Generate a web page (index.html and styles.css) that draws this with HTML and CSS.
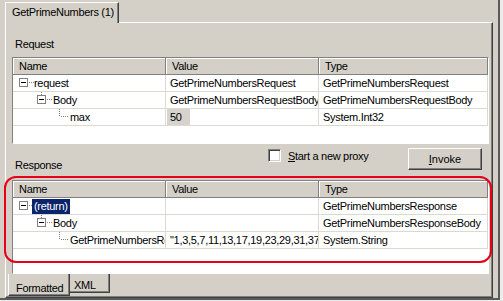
FILE: index.html
```html
<!DOCTYPE html>
<html lang="en">
<head>
<meta charset="UTF-8" />
<title>WCF Test Client - GetPrimeNumbers</title>
<link rel="stylesheet" href="styles.css">
</head>
<body>

<div class="shot">
  <div class="tabstrip">
    <div class="tab">GetPrimeNumbers (1)</div>
  </div>

  <div class="page">
    <div class="section-label">Request</div>

    <div class="grid">
      <div class="grid-head">
        <div class="head-cell">Name</div>
        <div class="head-cell">Value</div>
        <div class="head-cell">Type</div>
      </div>
      <div class="row">
        <div class="cell name">
          <svg class="gutter" width="21" height="16" viewBox="0 0 21 16">
            <rect x="6.5" y="3.5" width="8" height="8" fill="#fff" stroke="#808080"/>
            <path d="M8 7.5h5" stroke="#000"/>
            <path d="M16 7.5h5" stroke="#808080" stroke-dasharray="1 1"/>
          </svg>
          request
        </div>
        <div class="cell">GetPrimeNumbersRequest</div>
        <div class="cell">GetPrimeNumbersRequest</div>
      </div>
      <div class="row">
        <div class="cell name">
          <svg class="gutter" width="40" height="16" viewBox="0 0 40 16">
            <path d="M28.5 0v3" stroke="#808080" stroke-dasharray="1 1"/>
            <rect x="24.5" y="3.5" width="8" height="8" fill="#fff" stroke="#808080"/>
            <path d="M26 7.5h5" stroke="#000"/>
            <path d="M34 7.5h5" stroke="#808080" stroke-dasharray="1 1"/>
          </svg>
          Body
        </div>
        <div class="cell">GetPrimeNumbersRequestBody</div>
        <div class="cell">GetPrimeNumbersRequestBody</div>
      </div>
      <div class="row">
        <div class="cell name">
          <svg class="gutter" width="57" height="16" viewBox="0 0 57 16">
            <path d="M46.5 0v8" stroke="#808080" stroke-dasharray="1 1"/>
            <path d="M48 7.5h8" stroke="#808080" stroke-dasharray="1 1"/>
          </svg>
          max
        </div>
        <div class="cell edit"><span class="edit-box">50</span></div>
        <div class="cell">System.Int32</div>
      </div>
    </div>

    <div class="toolbar">
      <div class="section-label">Response</div>
      <label class="proxy">
        <span class="check"></span>
        <span><u>S</u>tart a new proxy</span>
      </label>
      <button type="button" class="invoke"><u>I</u>nvoke</button>
    </div>

    <div class="grid response">
      <div class="grid-head">
        <div class="head-cell">Name</div>
        <div class="head-cell">Value</div>
        <div class="head-cell">Type</div>
      </div>
      <div class="row">
        <div class="cell name">
          <svg class="gutter" width="19" height="16" viewBox="0 0 19 16">
            <rect x="6.5" y="3.5" width="8" height="8" fill="#fff" stroke="#808080"/>
            <path d="M8 7.5h5" stroke="#000"/>
            <path d="M16 7.5h3" stroke="#808080" stroke-dasharray="1 1"/>
          </svg>
          <span class="selected">(return)</span>
        </div>
        <div class="cell"></div>
        <div class="cell">GetPrimeNumbersResponse</div>
      </div>
      <div class="row">
        <div class="cell name">
          <svg class="gutter" width="40" height="16" viewBox="0 0 40 16">
            <path d="M28.5 0v3" stroke="#808080" stroke-dasharray="1 1"/>
            <rect x="24.5" y="3.5" width="8" height="8" fill="#fff" stroke="#808080"/>
            <path d="M26 7.5h5" stroke="#000"/>
            <path d="M34 7.5h5" stroke="#808080" stroke-dasharray="1 1"/>
          </svg>
          Body
        </div>
        <div class="cell"></div>
        <div class="cell">GetPrimeNumbersResponseBody</div>
      </div>
      <div class="row">
        <div class="cell name">
          <svg class="gutter" width="57" height="16" viewBox="0 0 57 16">
            <path d="M46.5 0v8" stroke="#808080" stroke-dasharray="1 1"/>
            <path d="M48 7.5h8" stroke="#808080" stroke-dasharray="1 1"/>
          </svg>
          GetPrimeNumbersResult
        </div>
        <div class="cell">"1,3,5,7,11,13,17,19,23,29,31,37,41,43,47"</div>
        <div class="cell">System.String</div>
      </div>
    </div>

    <div class="subtabs">
      <div class="subtab active">Formatted</div>
      <div class="subtab">XML</div>
    </div>
  </div>

  <!-- red annotation drawn over the response grid -->
  <div class="callout"></div>
</div>

</body>
</html>
```

FILE: styles.css
```css
/* Reset & base */
* {
  box-sizing: border-box;
}
body {
  margin: 0;
  background: #ececec;
  font-family: 'Liberation Sans', Arial, sans-serif;
  font-size: 11px;
  letter-spacing: -0.3px;
  color: #000;
}

/* Whole window, with its dark shadow edge */
.shot {
  position: relative;
  width: 500px;
  height: 300px;
  background: #d4d0c8;
  padding: 2px 0 0 5px;
  border-right: 2px solid #5a5a5a;
  border-bottom: 2px solid #5a5a5a;
}

/* Top tab */
.tabstrip {
  display: flex;
  height: 20px;
}
.tab {
  position: relative;
  z-index: 1;
  width: 114px;
  height: 21px;
  padding: 0 0 0 6px;
  line-height: 19px;
  background: #d4d0c8;
  border: 1px solid;
  border-color: #fff #404040 transparent #fff;
  border-bottom: none;
  box-shadow: inset -1px 0 #808080;
}

/* Tab page */
.page {
  width: 488px;
  height: 276px;
  border: 1px solid;
  border-color: #fff #404040 #404040 #fff;
  box-shadow: inset -1px -1px #808080;
  padding: 14px 3px 0 6px;
}

.section-label {
  height: 14px;
  line-height: 14px;
  padding-left: 3px;
  margin-bottom: 6px;
}

/* Property grids */
.grid {
  height: 87px;
  background: #fff;
  border: 1px solid;
  border-color: #808080 #fff #fff #808080;
  overflow: hidden;
}
.grid.response {
  height: 94px;
}
.grid-head,
.row {
  display: grid;
  grid-template-columns: 153px 153px 1fr;
  height: 17px;
}
.grid-head {
  background: #d4d0c8;
}
.head-cell {
  border-right: 1px solid #808080;
  border-bottom: 1px solid #808080;
  box-shadow: inset 1px 1px #fff;
  padding-left: 6px;
  line-height: 16px;
}
.cell {
  display: flex;
  align-items: center;
  padding-left: 4px;
  border-right: 1px solid #dcd9d3;
  border-bottom: 1px solid #dcd9d3;
  white-space: nowrap;
  overflow: hidden;
}
.cell.name {
  padding-left: 0;
}
.gutter {
  flex: none;
  display: block;
}
.cell.edit {
  padding-left: 1px;
}
.edit-box {
  display: block;
  width: 23px;
  height: 16px;
  line-height: 16px;
  padding-left: 3px;
  background: #d6d3ce;
}
.selected {
  background: #0a246a;
  color: #fff;
  padding: 0 2px;
  line-height: 15px;
}

/* Row between the grids */
.toolbar {
  display: flex;
  height: 36px;
}
.toolbar .section-label {
  align-self: flex-end;
  margin-bottom: 8px;
}
.proxy {
  display: flex;
  align-items: center;
  gap: 7px;
  width: 140px;
  height: 13px;
  margin-left: auto;
  margin-top: 5px;
}
.check {
  width: 13px;
  height: 13px;
  background: #fff;
  border: 1px solid;
  border-color: #808080 #fff #fff #808080;
  box-shadow: inset 1px 1px #404040, inset -1px -1px #d4d0c8;
}
.invoke {
  width: 74px;
  height: 22px;
  margin: 4px 7px 0 0;
  padding: 0;
  background: #d4d0c8;
  border: 1px solid;
  border-color: #fff #404040 #404040 #fff;
  box-shadow: inset -1px -1px #808080;
  font: inherit;
  color: #000;
}

/* Formatted / XML tabs */
.subtabs {
  display: flex;
  margin-left: -4px;
}
.subtab {
  height: 19px;
  padding: 4px 0 0 4px;
  line-height: 14px;
  border-right: 1px solid #404040;
  border-bottom: 1px solid #404040;
  box-shadow: inset -1px -1px #808080;
  width: 40px;
}
.subtab.active {
  width: 62px;
  height: 22px;
  padding: 7px 0 0 7px;
  border-left: 1px solid #fff;
}

/* Red highlight ring */
.callout {
  position: absolute;
  left: 4px;
  top: 176px;
  width: 488px;
  height: 87px;
  border: 2px solid #e6001a;
  border-radius: 12px;
  pointer-events: none;
}
```
